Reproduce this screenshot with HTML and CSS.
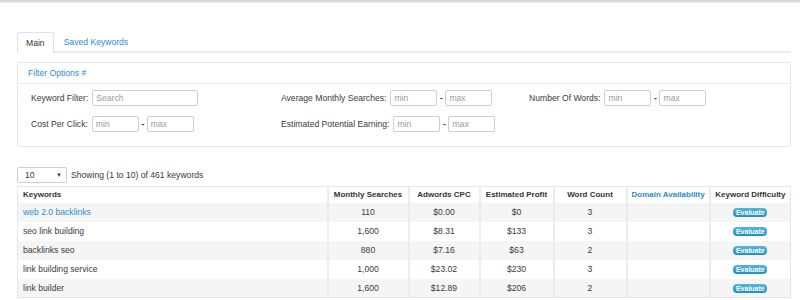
FILE: index.html
```html
<!DOCTYPE html>
<html lang="en">
<head>
    <meta charset="UTF-8">
    <title>Keywords</title>
    <link rel="stylesheet" href="styles.css">
</head>
<body>
    <div class="topbar"></div>
    <div class="page">
        <ul class="tabs">
            <li class="tab active">Main</li>
            <li class="tab">Saved Keywords</li>
        </ul>

        <div class="panel">
            <div class="panel-head">Filter Options #</div>
            <div class="filters">
                <div class="field">
                    <label>Keyword Filter:</label>
                    <input type="text" class="wide" placeholder="Search">
                </div>
                <div class="field">
                    <label>Average Monthly Searches:</label>
                    <input type="text" placeholder="min"><span class="dash">-</span><input type="text" placeholder="max">
                </div>
                <div class="field">
                    <label>Number Of Words:</label>
                    <input type="text" placeholder="min"><span class="dash">-</span><input type="text" placeholder="max">
                </div>
                <div class="field">
                    <label>Cost Per Click:</label>
                    <input type="text" placeholder="min"><span class="dash">-</span><input type="text" placeholder="max">
                </div>
                <div class="field">
                    <label>Estimated Potential Earning:</label>
                    <input type="text" placeholder="min"><span class="dash">-</span><input type="text" placeholder="max">
                </div>
            </div>
        </div>

        <div class="listbar">
            <div class="perpage"><span>10</span><span class="caret">&#9660;</span></div>
            <span>Showing (1 to 10) of 461 keywords</span>
        </div>

        <table class="results">
            <thead>
                <tr>
                    <th class="kw">Keywords</th>
                    <th>Monthly Searches</th>
                    <th>Adwords CPC</th>
                    <th>Estimated Profit</th>
                    <th>Word Count</th>
                    <th class="link">Domain Availability</th>
                    <th>Keyword Difficulty</th>
                </tr>
            </thead>
            <tbody>
                <tr>
                    <td class="kw"><a href="#">web 2.0 backlinks</a></td>
                    <td>110</td><td>$0.00</td><td>$0</td><td>3</td><td></td>
                    <td><button class="eval">Evaluate</button></td>
                </tr>
                <tr>
                    <td class="kw">seo link building</td>
                    <td>1,600</td><td>$8.31</td><td>$133</td><td>3</td><td></td>
                    <td><button class="eval">Evaluate</button></td>
                </tr>
                <tr>
                    <td class="kw">backlinks seo</td>
                    <td>880</td><td>$7.16</td><td>$63</td><td>2</td><td></td>
                    <td><button class="eval">Evaluate</button></td>
                </tr>
                <tr>
                    <td class="kw">link building service</td>
                    <td>1,000</td><td>$23.02</td><td>$230</td><td>3</td><td></td>
                    <td><button class="eval">Evaluate</button></td>
                </tr>
                <tr>
                    <td class="kw">link builder</td>
                    <td>1,600</td><td>$12.89</td><td>$206</td><td>2</td><td></td>
                    <td><button class="eval">Evaluate</button></td>
                </tr>
            </tbody>
        </table>
    </div>
</body>
</html>
```

FILE: styles.css
```css
* {
    margin: 0;
    padding: 0;
    box-sizing: border-box;
}
body {
    font-family: "Liberation Sans", Arial, sans-serif;
    font-size: 8.6px;
    color: #3a3a3a;
    background: #fff;
    overflow: hidden;
}
.topbar {
    height: 3px;
    background: linear-gradient(#cfcfcf, #ececec);
}
.page {
    padding: 29px 9px 0 17px;
}
.tabs {
    list-style: none;
    display: flex;
    border-bottom: 2px solid #ececec;
    height: 21px;
}
.tab {
    padding: 0 10px;
    line-height: 20px;
    color: #2f8bcc;
}
.tab.active {
    color: #333;
    border: 1px solid #e2e2e2;
    border-bottom: none;
    border-radius: 3px 3px 0 0;
    background: #fff;
    height: 21px;
    padding: 0 8px;
}
.panel {
    margin-top: 9px;
    border: 1px solid #e6e6e6;
    border-radius: 3px;
    height: 85px;
}
.panel-head {
    color: #2f8bcc;
    height: 21px;
    line-height: 20px;
    padding-left: 10px;
    border-bottom: 1px solid #ececec;
}
.filters {
    display: grid;
    grid-template-columns: 250px 248px auto;
    row-gap: 10px;
    padding: 6px 13px 0;
}
.field {
    display: flex;
    align-items: center;
    height: 16px;
}
.field label {
    margin-right: 4px;
}
.field input {
    width: 47px;
    height: 16px;
    border: 1px solid #cfcfcf;
    border-radius: 2px;
    font: inherit;
    padding: 0 3px;
    color: #555;
}
.field input.wide {
    width: 106px;
}
.field input::placeholder {
    color: #9a9a9a;
}
.dash {
    width: 8px;
    text-align: center;
    font-weight: bold;
}
.listbar {
    margin-top: 19px;
    display: flex;
    align-items: center;
    gap: 4px;
    height: 17px;
}
.perpage {
    width: 50px;
    height: 16px;
    border: 1px solid #cfcfcf;
    border-radius: 2px;
    display: flex;
    justify-content: space-between;
    align-items: center;
    padding: 0 4px 0 7px;
}
.caret {
    font-size: 6px;
}
.results {
    margin-top: 3px;
    width: 100%;
    border-collapse: collapse;
    border: 1px solid #e6e6e6;
}
.results th,
.results td {
    border-left: 2px solid #ececec;
    text-align: center;
    white-space: nowrap;
}
.results th {
    height: 16px;
    font-size: 8px;
    font-weight: bold;
    color: #333;
    padding: 0 4px;
}
.results td {
    height: 19px;
}
.results th.kw,
.results td.kw {
    text-align: left;
    padding-left: 5px;
    border-left: none;
}
.results th:nth-child(1) { width: 310px; }
.results th:nth-child(2) { width: 81px; }
.results th:nth-child(3) { width: 71px; }
.results th:nth-child(4) { width: 74px; }
.results th:nth-child(5) { width: 73px; }
.results th:nth-child(6) { width: 83px; }
.results th.link {
    color: #2f8bcc;
}
.results tbody tr:nth-child(odd) {
    background: #f5f5f5;
}
.results td a {
    color: #2f8bcc;
    text-decoration: none;
}
.eval {
    width: 34px;
    height: 9px;
    border: none;
    border-radius: 4px;
    background: linear-gradient(#52b8de, #2190bf);
    color: #fff;
    font: bold 7px "Liberation Sans", Arial, sans-serif;
    line-height: 9px;
    vertical-align: middle;
}
```
